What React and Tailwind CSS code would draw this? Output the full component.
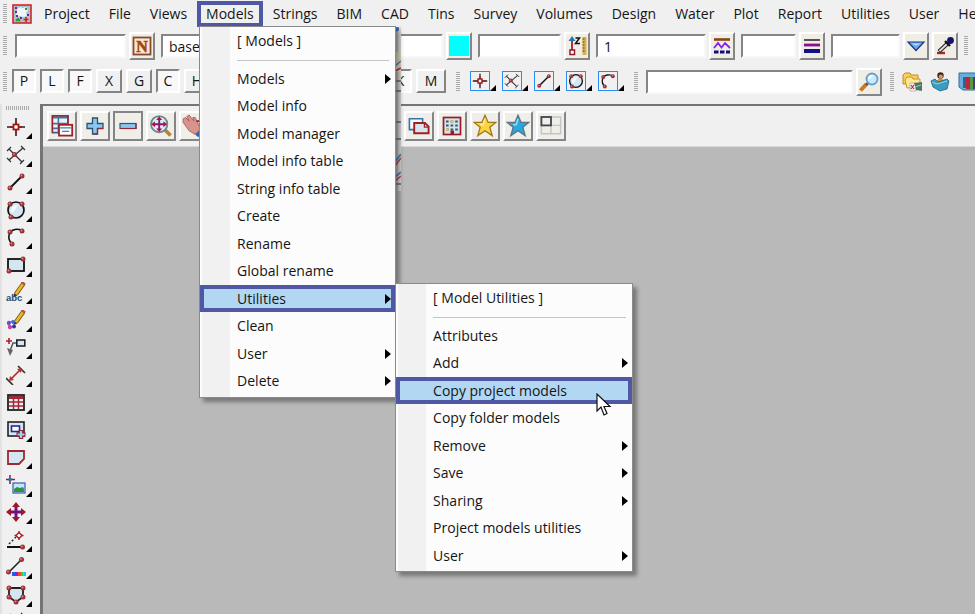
import React from 'react';
import clsx from 'clsx';

/* ---------- icons ---------- */

const Svg = ({ children, className = 'w-5 h-5' }) => (
  <svg viewBox="0 0 20 20" className={clsx('block shrink-0', className)} fill="none">
    {children}
  </svg>
);

const Dots = ({ points }) =>
  points.map(([x, y]) => (
    <g key={`${x}-${y}`}>
      <circle cx={x} cy={y} r="2.5" fill="#9c2f36" />
      <circle cx={x - 0.5} cy={y - 0.5} r="0.9" fill="#d9888c" />
    </g>
  ));

const glass = '#d3e6f2';

const AppLogo = () => (
  <Svg>
    <rect x="1" y="1" width="18" height="18" fill="#a9c3cc" stroke="#d6232b" strokeWidth="1.6" />
    <path d="M5 5l3-2 3 1 3-1 2 3-2 3 1 3-4 1-3-1-3 1-1-3 1-2z" fill="#eef6f8" />
    <path d="M3 4h2M3 8h2M15 11h2M8 14h2M4 12h2" stroke="#7a1fa0" strokeWidth="1.8" />
    <path d="M14 13v5M11.500 15.500h5" stroke="#e01818" strokeWidth="1.6" />
    <path d="M4 17l2-2 2 2M13 5h2" stroke="#18a030" strokeWidth="2" />
  </Svg>
);

const PointIcon = () => (
  <Svg>
    <path d="M10 1v18M1 10h18" stroke="#222" strokeWidth="1.6" />
    <path d="M10 4v12M4 10h12" stroke="#a01818" strokeWidth="1.4" />
    <rect x="7.500" y="7.500" width="5" height="5" fill="#fff" stroke="#a01818" strokeWidth="1.8" />
  </Svg>
);
const CrossIcon = () => (
  <Svg>
    <path d="M3 4l13 13M17 3L3 15" stroke="#333" strokeWidth="1.3" />
    <path d="M1 6l4-4M14 19l4-4M15 1l4 4M1 13l4 4" stroke="#333" strokeWidth="1.2" />
    <Dots points={[[8.500, 9.500]]} />
  </Svg>
);
const LineIcon = () => (
  <Svg>
    <path d="M4 16L16 4" stroke="#111" strokeWidth="1.8" />
    <Dots points={[[4, 16], [16, 4]]} />
  </Svg>
);
const CircleIcon = () => (
  <Svg>
    <circle cx="10" cy="10" r="8" fill={glass} stroke="#111" strokeWidth="1.7" />
    <path d="M5 12a6 6 0 0 1 7-7l-5 8z" fill="#f4fafd" />
    <Dots points={[[4, 4], [16, 4], [5, 17]]} />
  </Svg>
);
const ArcIcon = () => (
  <Svg>
    <path d="M6 17C1 12 2 4 9 2.500c3-.5 6 0 8 1.500L7 16z" fill="#eef4f8" />
    <path d="M6 17C1 12 2 4 9 2.500c3-.5 6 0 8 1.500" stroke="#111" strokeWidth="1.6" />
    <Dots points={[[4, 5], [16, 4], [6, 17]]} />
  </Svg>
);
const RectIcon = () => (
  <Svg>
    <rect x="2" y="4" width="16" height="12" fill={glass} stroke="#111" strokeWidth="1.8" />
    <Dots points={[[17, 4], [3, 16]]} />
  </Svg>
);
const Pencil = () => (
  <>
    <path d="M17.500 1.500L10 12" stroke="#7c5a10" strokeWidth="4.600" />
    <path d="M17 2L10 12" stroke="#e8b828" strokeWidth="2.800" />
    <path d="M15.500 0l3.500 2.500" stroke="#c04a5a" strokeWidth="2.400" />
    <path d="M8 11l3.500 2.500L7.500 15z" fill="#443322" />
  </>
);
const TextIcon = () => (
  <Svg>
    <Pencil />
    <text x="0" y="19" fontSize="9.500" fontWeight="700" fontFamily="Liberation Sans, sans-serif" fill="#1c4a6c">
      abc
    </text>
  </Svg>
);
const BrushIcon = () => (
  <Svg>
    <Pencil />
    <circle cx="3" cy="13" r="2.200" fill="#6a50d8" />
    <circle cx="7" cy="12" r="2" fill="#4068e0" />
    <circle cx="4" cy="17" r="2.200" fill="#d04090" />
    <circle cx="8" cy="16.500" r="2" fill="#3030a0" />
    <circle cx="5.500" cy="14.500" r="1.100" fill="#fff" />
  </Svg>
);
const LeaderIcon = () => (
  <Svg>
    <path d="M3 1v6M0 4h6" stroke="#b02028" strokeWidth="1.600" />
    <path d="M11 6H7L4 14" stroke="#555" strokeWidth="1.500" />
    <path d="M1 11l6 2-3 6z" fill="#666" />
    <rect x="10.800" y="3" width="8" height="6" fill={glass} stroke="#222" strokeWidth="1.600" />
  </Svg>
);
const DimensionIcon = () => (
  <Svg>
    <path d="M12 1l7 7M0 13l7 7" stroke="#333" strokeWidth="1.700" />
    <path d="M5 14l9-9" stroke="#a82828" strokeWidth="1.600" />
    <path d="M3 16l1-5 4 4zM16 3l-5 1 4 4z" fill="#b83232" />
  </Svg>
);
const TableIcon = () => (
  <Svg>
    <rect x="2" y="3" width="16" height="15" fill="#f4eef0" stroke="#222" strokeWidth="1.800" />
    <path d="M3 5.500h14" stroke="#a02838" strokeWidth="3" />
    <path d="M3 10h14M3 14h14M7.500 4v13M12.500 4v13" stroke="#a02838" strokeWidth="1.500" />
  </Svg>
);
const ViewPlusIcon = () => (
  <Svg>
    <rect x="2" y="2" width="16" height="14" fill={glass} stroke="#222" strokeWidth="1.600" />
    <rect x="5.500" y="6" width="8" height="5.500" fill="#fff" stroke="#2828a0" strokeWidth="1.600" />
    <path d="M15 10v9M10.500 14.500h9" stroke="#902030" strokeWidth="4.400" />
    <path d="M15 11v7M11.500 14.500h7" stroke="#9cd4f4" strokeWidth="2.200" />
  </Svg>
);
const PolygonIcon = () => (
  <Svg>
    <path d="M2 4h16v8l-5 5H2z" fill={glass} stroke="#a02830" strokeWidth="1.800" />
  </Svg>
);
const ImageIcon = () => (
  <Svg>
    <path d="M4 0v9M0 4.500h9" stroke="#902030" strokeWidth="1.500" />
    <rect x="2.500" y="3" width="3" height="3" fill="#2878b8" />
    <rect x="7" y="8" width="12" height="10" fill="#c5e4ff" stroke="#3c5ca8" strokeWidth="1.200" />
    <path d="M8 17v-3l3-2 3 1 3-1 1 2v3z" fill="#2d9440" />
  </Svg>
);
const MoveIcon = () => (
  <Svg>
    <path d="M10 3v14M3 10h14" stroke="#7a1080" strokeWidth="3" />
    <path d="M10 0l4 5H6zM10 20l4-5H6zM0 10l5-4v8zM20 10l-5-4v8z" fill="#a01828" />
  </Svg>
);
const SnapIcon = () => (
  <Svg>
    <path d="M3 14L10 7" stroke="#222" strokeWidth="1.500" strokeDasharray="2 2" />
    <path d="M13 1v9M8.500 5.500h9" stroke="#a02028" strokeWidth="1.300" />
    <path d="M13 2.500l3 3-3 3-3-3z" fill="#fff" stroke="#a02028" strokeWidth="1.400" />
    <path d="M1 17h15" stroke="#111" strokeWidth="2" />
    <Dots points={[[16.500, 17]]} />
  </Svg>
);
const ColourLineIcon = () => (
  <Svg>
    <path d="M3 15L15 3" stroke="#222" strokeWidth="1.600" />
    <Dots points={[[15.500, 2.500], [2.500, 15]]} />
    <path d="M6 17h3" stroke="#2060f0" strokeWidth="4" />
    <path d="M9 17h3" stroke="#9020d0" strokeWidth="4" />
    <path d="M12 17h3" stroke="#f05020" strokeWidth="4" />
    <path d="M15 17h2.500" stroke="#30d040" strokeWidth="4" />
    <path d="M17.500 17H20" stroke="#20c0f0" strokeWidth="4" />
  </Svg>
);
const ShieldIcon = () => (
  <Svg>
    <path d="M3 3h14v9l-7 5-7-5z" fill={glass} stroke="#222" strokeWidth="1.800" />
    <Dots points={[[3, 3], [17, 3], [3, 12], [17, 12], [10, 17]]} />
  </Svg>
);

const NIcon = () => (
  <Svg>
    <rect x="1.500" y="1.500" width="17" height="17" fill="#f7e8d6" stroke="#8a4a28" strokeWidth="1.800" />
    <text x="10" y="15.500" textAnchor="middle" fontSize="16" fontWeight="700" fontFamily="Liberation Serif, serif" fill="#a8440c" stroke="#a8440c" strokeWidth=".6">
      N
    </text>
  </Svg>
);
const HeightIcon = () => (
  <Svg>
    <path d="M5 14V4" stroke="#b01830" strokeWidth="1.800" />
    <path d="M5 0l3.500 5h-7z" fill="#2870b8" />
    <rect x="3" y="14" width="4.500" height="4.500" fill="#fff" stroke="#901830" strokeWidth="1.500" />
    <path d="M8.500 2h4l-4 5.500h4.500" stroke="#111" strokeWidth="1.500" />
    <rect x="15.500" y="1" width="4" height="18" fill="#d8b04c" />
    <path d="M15.500 3h2M15.500 6h2M15.500 9h2M15.500 12h2M15.500 15h2" stroke="#6a4c10" />
  </Svg>
);
const LinestyleIcon = () => (
  <Svg>
    <path d="M2 3.500h16" stroke="#8a4410" strokeWidth="2.600" />
    <path d="M2 12l4-5 3.500 4.500L13 7l5 5" stroke="#8a20f0" strokeWidth="1.800" />
    <path d="M2 16h16" stroke="#101078" strokeWidth="2.800" strokeDasharray="4.500 1.500" />
  </Svg>
);
const WeightIcon = () => (
  <Svg>
    <path d="M2 4h16" stroke="#222" strokeWidth="1.500" />
    <path d="M2 9h16" stroke="#881090" strokeWidth="2.800" />
    <path d="M2 15h16" stroke="#101088" strokeWidth="4" />
  </Svg>
);
const TriangleIcon = () => (
  <Svg>
    <path d="M2 6h16l-8 8.500z" fill="#68aaf0" stroke="#1c3484" strokeWidth="1.200" />
    <path d="M5 7.500h10l-5 2z" fill="#b8dcff" />
  </Svg>
);
const DropperIcon = () => (
  <Svg>
    <path d="M2 17h8" stroke="#b02820" strokeWidth="2.400" />
    <path d="M4 15.500L13 7" stroke="#222" strokeWidth="4" />
    <path d="M4.500 15L12 8" stroke="#dde4ea" strokeWidth="1.800" />
    <path d="M10 5l5 5" stroke="#111" strokeWidth="2.400" />
    <circle cx="15.500" cy="4.500" r="3.400" fill="#14146c" />
  </Svg>
);
const SearchIcon = () => (
  <Svg>
    <path d="M1.500 18.500L7.500 12" stroke="#c87828" strokeWidth="4" />
    <path d="M7 13l2.500-2.500" stroke="#555" strokeWidth="2.500" />
    <circle cx="13" cy="7" r="5.500" fill="#c8ecff" stroke="#6a9ed0" strokeWidth="1.800" />
    <path d="M10 7a3.500 3.500 0 0 1 3.500-3" stroke="#fff" strokeWidth="1.800" />
  </Svg>
);
const FolderIcon = () => (
  <Svg>
    <path d="M1 3l2-2h5l1 2h7v9H1z" fill="#f5d060" stroke="#c08c18" />
    <path d="M3 8l2-3h5l1 2h7v8l-13 1z" fill="#ffe890" stroke="#c89420" />
    <path d="M8 11h6v8H8z" fill="#f4f4f4" stroke="#999" strokeWidth=".6" />
    <path d="M9 13l3 4M12 13l-3 4" stroke="#c82838" strokeWidth="1.200" />
    <path d="M12 11l8-1v9l-6-1z" fill="#48786a" />
    <path d="M13 15l6-2" stroke="#9cc4b4" />
  </Svg>
);
const PersonFolderIcon = () => (
  <Svg>
    <path d="M6 12c0-7 9-7 9 0z" fill="#e88a20" />
    <circle cx="10.500" cy="3.500" r="3.200" fill="#402818" />
    <circle cx="10.800" cy="4.600" r="2.100" fill="#dc9460" />
    <path d="M1 9l4-2 3 3 9-3 2 2-2 8-7 2-7-4z" fill="#3c9cc0" stroke="#1c6484" strokeWidth=".8" />
    <path d="M2 10l5 2 10-3" stroke="#8cd4e8" />
  </Svg>
);
const BooksIcon = () => (
  <Svg>
    <path d="M1 1h18v17H5L1 15z" fill="#68aed8" stroke="#28709c" />
    <path d="M5 5h3v11H5z" fill="#2c6494" />
    <path d="M8 5h4v12H8z" fill="#b82840" />
    <path d="M12 5h3v12h-3z" fill="#58983c" />
    <path d="M15 5h4v12h-4z" fill="#483c80" />
  </Svg>
);

const WindowsIcon = () => (
  <Svg className="w-6 h-6">
    <path d="M2 1.500h13v14H2z" fill="#eaf2f8" stroke="#2c6494" strokeWidth="1.400" />
    <path d="M2 3h13M2 8h13M2 12h6M7 3v12" stroke="#3c74a4" strokeWidth="1.300" />
    <path d="M2 15.500V1.500h13V8" stroke="#a02028" strokeWidth="1" />
    <rect x="7.500" y="9" width="11" height="9" fill="#fff" stroke="#a02028" strokeWidth="1.500" />
    <path d="M8 11.500h10M10 14.500h6" stroke="#4a7eac" />
  </Svg>
);
const PlusIcon = () => (
  <Svg>
    <path d="M7.500 2h5v5.500H18v5h-5.500V18h-5v-5.500H2v-5h5.500z" fill="#88c8f0" stroke="#30506c" strokeWidth="1.300" />
    <path d="M8 18h4.500v-5.500H18" stroke="#902838" strokeWidth="1.200" />
  </Svg>
);
const MinusIcon = () => (
  <Svg>
    <rect x="2" y="7.500" width="16" height="5" fill="#88c8f0" stroke="#34587a" strokeWidth="1.200" />
    <path d="M2 12.500h16v-5" stroke="#902838" strokeWidth="1.200" />
  </Svg>
);
const ZoomIcon = () => (
  <Svg className="w-6 h-6">
    <path d="M13 13l5 5" stroke="#b88430" strokeWidth="3" />
    <circle cx="8.500" cy="8.500" r="6.800" fill="#dcecf4" stroke="#6c8494" strokeWidth="1.500" />
    <path d="M8.500 3.500v10M3.500 8.500h10" stroke="#881878" strokeWidth="1.600" />
    <path d="M8.500 2l2.500 3h-5zM8.500 15l2.500-3h-5zM2 8.500l3-2.500v5zM15 8.500l-3-2.500v5z" fill="#a01838" />
  </Svg>
);
const HandIcon = () => (
  <Svg className="w-6 h-6">
    <path d="M1 4l2-1 3 3-2-4 2-1 4 5-1-3 2 0 3 6 1 4-4 4-5-3-5-7z" fill="#d8948c" stroke="#a86058" strokeWidth=".8" />
    <path d="M11 17l4-4 4 3v3h-6z" fill="#2868b0" />
    <path d="M16 2v8M12 6h8" stroke="#a01828" strokeWidth="1.500" />
  </Svg>
);
const LayersIcon = () => (
  <Svg className="w-6 h-6">
    <path d="M2 4h11v9H2z" fill="#f8fcff" stroke="#3474a8" strokeWidth="1.300" />
    <path d="M6 7.500h9l3 3V16H6z" fill="#d8e4ea" stroke="#a02028" strokeWidth="1.600" />
    <path d="M14.500 7.500V11H18" stroke="#a02028" />
  </Svg>
);
const BuildingIcon = () => (
  <Svg>
    <rect x="1.500" y="1.500" width="17" height="17" fill="#d4e4ec" stroke="#981c28" strokeWidth="1.700" />
    <path d="M4 5.500h13M4 9.500h13M4 13.500h13" stroke="#34586c" strokeWidth="2.200" strokeDasharray="2.600 2" />
    <path d="M8.600 5.500h2.600M4 13.500h2.600" stroke="#f0d040" strokeWidth="2" />
    <path d="M8.500 18v-3.500h3.500V18z" fill="#981c28" />
  </Svg>
);
const Star = ({ fill, stroke }) => (
  <Svg className="w-6 h-6">
    <path d="M10 1l2.600 6H19l-5 4 2 7-6-4-6 4 2-7-5-4h6.400z" fill={fill} stroke={stroke} strokeWidth="1.100" />
    <path d="M10 4l-1.500 5H6" stroke="#fff" strokeOpacity=".55" strokeWidth="1.300" />
  </Svg>
);
const PanesIcon = () => (
  <Svg className="w-6 h-6">
    <path d="M2 2.500h16v14H2zM10 3v14M2 9.500h16" stroke="#c4c4c4" strokeWidth="1.200" />
    <rect x="2" y="2.500" width="8" height="7" fill="#eee" stroke="#444" strokeWidth="1.500" />
  </Svg>
);

/* ---------- small parts ---------- */

const Grip = ({ wide }) => (
  <span
    className={clsx(
      'block shrink-0',
      wide
        ? 'h-1 w-6 bg-[repeating-linear-gradient(90deg,#aaa_0_1px,transparent_1px_2px)]'
        : 'w-1 h-5 bg-[repeating-linear-gradient(#aaa_0_1px,transparent_1px_2px)]'
    )}
  />
);

const Corner = () => (
  <span className="absolute right-0 bottom-0 border-[3px] border-transparent border-r-black border-b-black" />
);

const Field = ({ label, value = '', className }) => (
  <input
    aria-label={label}
    defaultValue={value}
    className={clsx(
      'h-6 shrink-0 bg-white px-1.5 outline-none border-2 border-t-[#858585] border-l-[#858585] border-b-[#f8f8f8] border-r-[#f8f8f8]',
      className
    )}
  />
);

const raised = 'bg-[#f0ede4] border-2 border-t-white border-l-white border-b-[#858585] border-r-[#858585]';

const IconButton = ({ label, children }) => (
  <button aria-label={label} className={clsx('w-[26px] h-7 shrink-0 flex items-center justify-center', raised)}>
    {children}
  </button>
);

const ViewButton = ({ label, active, children }) => (
  <button
    aria-label={label}
    className={clsx(
      'w-[30px] h-[30px] shrink-0 flex items-center justify-center border-2 bg-[#f0eee8] border-b-[#858585] border-r-[#858585]',
      active ? 'border-t-[#858585] border-l-[#858585]' : 'border-t-white border-l-white'
    )}
  >
    {children}
  </button>
);

const Toggle = ({ on, wide, children }) => (
  <button
    aria-pressed={!!on}
    className={clsx(
      'h-6 shrink-0 border-2 text-center leading-5',
      wide ? 'w-[30px]' : on ? 'w-6' : 'w-[26px]',
      on
        ? 'bg-[#f8f8f8] border-t-[#858585] border-l-[#858585] border-b-white border-r-white'
        : 'bg-[#f0f0f0] border-t-white border-l-white border-b-[#858585] border-r-[#858585]'
    )}
  >
    {children}
  </button>
);

const SnapButton = ({ label, children }) => (
  <button aria-label={label} className="relative w-[26px] h-5 shrink-0">
    <span className="flex w-5 h-5 items-center justify-center border border-[#2a8cf0] [&>svg]:w-4 [&>svg]:h-4">
      {children}
    </span>
    <Corner />
  </button>
);

/* ---------- menus ---------- */

const Cursor = () => (
  <svg viewBox="0 0 16 24" className="absolute left-[200px] top-4 w-4 h-6 z-10">
    <path d="M1 1v17l4-4 3 8 3-1.500-3-7h6z" fill="#fff" stroke="#111" strokeWidth="1.200" />
  </svg>
);

const MenuPanel = ({ title, items, className }) => (
  <div
    className={clsx(
      'absolute z-20 border border-[#8a8a8a] pt-px pb-0.5 shadow-[4px_4px_4px_rgba(0,0,0,0.35)] bg-[linear-gradient(90deg,#fcfcfc_2px,#f1f1f1_2px_30px,#fcfcfc_30px)]',
      className
    )}
  >
    <div className="h-[26px] pl-[37px] leading-[26px]">{title}</div>
    <div className="ml-[37px] mr-1.5 mt-1.5 mb-1 border-t border-[#c4c4c4]" />
    <ul role="menu">
      {items.map((item) => (
        <li key={item.label} role="none" className="relative odd:h-[27px] even:h-7">
          <button
            role="menuitem"
            className={clsx(
              'relative flex w-full h-full items-center justify-between pl-[37px] pr-1 whitespace-nowrap',
              item.active && 'bg-[#b1d7f3] ring-4 ring-inset ring-[#5058a5]'
            )}
          >
            {item.label}
            {item.more && (
              <svg viewBox="0 0 6 10" className="w-1.5 h-2.5">
                <path d="M0 0l6 5-6 5z" fill="#000" />
              </svg>
            )}
          </button>
          {item.submenu}
          {item.cursor && <Cursor />}
        </li>
      ))}
    </ul>
  </div>
);

/* edge of the vertical toolbar that shows from behind the open menu */
const HiddenToolbarEdge = () => (
  <svg viewBox="0 0 6 164" className="absolute left-[198px] top-[26px] z-10 w-1.5 h-[164px]">
    <path d="M0 0h6v164H0z" fill="#d9d9d7" />
    <path d="M0 0h3v164H0z" fill="#aaa" fillOpacity=".6" />
    <circle cx="1.500" cy="2" r="2.500" fill="#3a6cb0" />
    <path d="M0 25h6v20H0z" fill="#e2dcc4" />
    <path d="M0 39l6-5" stroke="#5a88b8" strokeWidth="1.500" />
    <path d="M0 44l6-3" stroke="#c02840" strokeWidth="1.500" />
    <path d="M0 54h6M0 64h6M0 95h6M0 112h6M0 157h6" stroke="#858585" strokeWidth="2" />
    <path d="M0 135l6-8M0 150l6-5" stroke="#5a88b8" strokeWidth="2" />
    <path d="M0 139l6-8M0 154l6-5" stroke="#b84a58" strokeWidth="1.500" />
  </svg>
);

const utilityItems = [
  { label: 'Attributes' },
  { label: 'Add', more: true },
  { label: 'Copy project models', active: true, cursor: true },
  { label: 'Copy folder models' },
  { label: 'Remove', more: true },
  { label: 'Save', more: true },
  { label: 'Sharing', more: true },
  { label: 'Project models utilities' },
  { label: 'User', more: true },
];

const modelItems = [
  { label: 'Models', more: true },
  { label: 'Model info' },
  { label: 'Model manager' },
  { label: 'Model info table' },
  { label: 'String info table' },
  { label: 'Create' },
  { label: 'Rename' },
  { label: 'Global rename' },
  {
    label: 'Utilities',
    more: true,
    active: true,
    submenu: (
      <MenuPanel title="[ Model Utilities ]" items={utilityItems} className="left-[195px] -top-0.5 w-[238px]" />
    ),
  },
  { label: 'Clean' },
  { label: 'User', more: true },
  { label: 'Delete', more: true },
];

const menus = [
  'Project', 'File', 'Views', 'Models', 'Strings', 'BIM', 'CAD', 'Tins', 'Survey',
  'Volumes', 'Design', 'Water', 'Plot', 'Report', 'Utilities', 'User', 'Help',
];

const MenuBar = () => (
  <nav className="flex h-7 shrink-0 items-center gap-px pl-[3px]">
    <Grip />
    <span className="ml-1 mr-0.5">
      <AppLogo />
    </span>
    {menus.map((name) => (
      <div key={name} className="relative shrink-0">
        <button
          className={clsx('h-[26px] px-[9px] leading-[26px]', name === 'Models' && 'ring-4 ring-inset ring-[#5058a5]')}
        >
          {name}
        </button>
        {name === 'Models' && (
          <>
            <HiddenToolbarEdge />
            <MenuPanel title="[ Models ]" items={modelItems} className="left-0.5 top-[25px] w-[197px]" />
          </>
        )}
      </div>
    ))}
  </nav>
);

/* ---------- toolbars ---------- */

const AttributeBar = () => (
  <div className="flex h-9 shrink-0 items-center gap-1.5 pl-[3px]">
    <Grip />
    <div className="flex items-center gap-[3px] pl-0.5">
      <Field label="Name" className="w-[111px]" />
      <IconButton label="Name list"><NIcon /></IconButton>
    </div>
    <div className="flex items-center gap-[3px]">
      <Field label="Model" value="base" className="w-[109px]" />
      <IconButton label="Model list"><LayersIcon /></IconButton>
    </div>
    <div className="flex items-center gap-[3px]">
      <Field label="Colour" className="w-[138px]" />
      <IconButton label="Colour list">
        <span className="w-5 h-5 bg-[#00ffff]" />
      </IconButton>
    </div>
    <div className="flex items-center gap-[3px]">
      <Field label="Height" className="w-[83px]" />
      <IconButton label="Pick height"><HeightIcon /></IconButton>
    </div>
    <div className="flex items-center gap-[3px]">
      <Field label="Linestyle" value="1" className="w-[110px]" />
      <IconButton label="Linestyle list"><LinestyleIcon /></IconButton>
    </div>
    <div className="flex items-center gap-[3px]">
      <Field label="Weight" className="w-[55px]" />
      <IconButton label="Weight list"><WeightIcon /></IconButton>
    </div>
    <div className="flex items-center gap-[3px]">
      <Field label="Tinable" className="w-[69px]" />
      <IconButton label="Tinable list"><TriangleIcon /></IconButton>
      <IconButton label="Pick attributes"><DropperIcon /></IconButton>
    </div>
    <Grip />
  </div>
);

const SnapBar = () => (
  <div className="flex h-9 shrink-0 items-center pl-[3px]">
    <Grip />
    <div className="ml-[5px] mb-0.5 flex gap-1">
      <Toggle on>P</Toggle>
      <Toggle on>L</Toggle>
      <Toggle on>F</Toggle>
      <Toggle>X</Toggle>
      <Toggle>G</Toggle>
      <Toggle on>C</Toggle>
      <Toggle>H</Toggle>
      <span className="w-[170px]" />
      <Toggle on>K</Toggle>
      <Toggle wide>M</Toggle>
    </div>
    <span className="ml-2.5 mr-2.5">
      <Grip />
    </span>
    <div className="mb-0.5 flex gap-1.5">
      <SnapButton label="Point snap"><PointIcon /></SnapButton>
      <SnapButton label="Intersection snap"><CrossIcon /></SnapButton>
      <SnapButton label="Line snap"><LineIcon /></SnapButton>
      <SnapButton label="Circle snap"><CircleIcon /></SnapButton>
      <SnapButton label="Arc snap"><ArcIcon /></SnapButton>
    </div>
    <span className="ml-2.5 mr-2">
      <Grip />
    </span>
    <div className="flex items-center gap-[3px]">
      <Field label="Search" className="w-[207px]" />
      <IconButton label="Find"><SearchIcon /></IconButton>
    </div>
    <span className="ml-2 mr-2">
      <Grip />
    </span>
    <div className="flex gap-2">
      <button aria-label="Project folder"><FolderIcon /></button>
      <button aria-label="User folder"><PersonFolderIcon /></button>
      <button aria-label="Library"><BooksIcon /></button>
    </div>
  </div>
);

const tools = [
  ['Point', PointIcon], ['Intersection', CrossIcon], ['Line', LineIcon], ['Circle', CircleIcon],
  ['Arc', ArcIcon], ['Rectangle', RectIcon], ['Text', TextIcon], ['Symbol', BrushIcon],
  ['Leader', LeaderIcon], ['Dimension', DimensionIcon], ['Table', TableIcon], ['Add view', ViewPlusIcon],
  ['Polygon', PolygonIcon], ['Image', ImageIcon], ['Move', MoveIcon], ['Snap', SnapIcon],
  ['Colour', ColourLineIcon], ['Boundary', ShieldIcon], ['Trim', CrossIcon],
];

const SideBar = () => (
  <aside className="w-10 shrink-0 overflow-hidden border-l-2 border-[#e2e2e2] pl-1 pt-0.5">
    <Grip wide />
    <div className="pt-[3px]">
      {tools.map(([name, Icon]) => (
        <div key={name} className="flex items-center odd:h-7 even:h-[27px]">
          <button aria-label={name} className="relative w-[26px] h-6">
            <Icon />
            <Corner />
          </button>
        </div>
      ))}
    </div>
  </aside>
);

const ViewBar = () => (
  <div className="flex h-[41px] shrink-0 items-center gap-[3px] pl-1 bg-[#f0f0f0] border-b border-[#d8d8d8]">
    <ViewButton label="Windows"><WindowsIcon /></ViewButton>
    <ViewButton label="Zoom in"><PlusIcon /></ViewButton>
    <ViewButton label="Zoom out" active><MinusIcon /></ViewButton>
    <ViewButton label="Zoom window"><ZoomIcon /></ViewButton>
    <ViewButton label="Pan"><HandIcon /></ViewButton>
    <span className="w-[189px] shrink-0" />
    <ViewButton label="Layers"><LayersIcon /></ViewButton>
    <ViewButton label="Models"><BuildingIcon /></ViewButton>
    <ViewButton label="Favourites"><Star fill="#fbd440" stroke="#a07818" /></ViewButton>
    <ViewButton label="Shared favourites"><Star fill="#28a8e0" stroke="#5c7484" /></ViewButton>
    <ViewButton label="Layout"><PanesIcon /></ViewButton>
  </div>
);

export default function App() {
  return (
    <div className="flex h-screen flex-col overflow-hidden bg-[#f0f0f0] font-['Open_Sans',sans-serif] text-sm text-[#151515]">
      <MenuBar />
      <AttributeBar />
      <SnapBar />
      <div className="mt-1 flex min-h-0 flex-1">
        <SideBar />
        <main className="flex min-w-0 flex-1 flex-col border-t-2 border-l-[3px] border-[#747474] bg-[#b9b9b9]">
          <ViewBar />
        </main>
      </div>
    </div>
  );
}
